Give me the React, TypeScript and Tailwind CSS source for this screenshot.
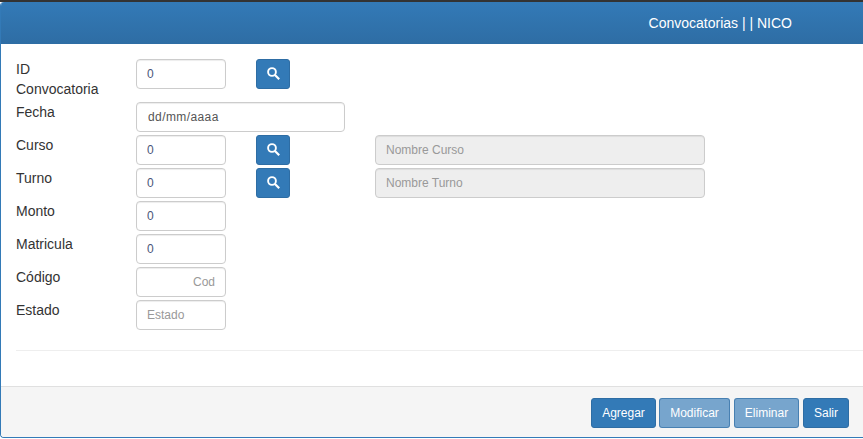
const inputBase =
  "h-[30px] rounded-[4px] border border-[#ccc] px-[10px] text-[12px] shadow-[inset_0_1px_1px_rgba(0,0,0,0.075)] outline-none";

function SearchButton() {
  return (
    <button className="ml-[30px] flex h-[30px] w-[34px] items-center justify-center rounded-[3px] border border-[#2e6da4] bg-[#337ab7]">
      <svg width="13" height="13" viewBox="0 0 13 13" fill="none" stroke="#fff" className="-mt-[2px]">
        <circle cx="5" cy="5" r="3.9" strokeWidth="1.9" />
        <path d="M8 8l4.2 4.2" strokeWidth="2.2" />
      </svg>
    </button>
  );
}

function Row({ label, children, className = "" }: { label: string; children: React.ReactNode; className?: string }) {
  return (
    <div className={`flex items-start ${className}`}>
      <label className="mr-[30px] w-[90px] shrink-0 text-[14px] leading-[20px] text-[#333]">{label}</label>
      {children}
    </div>
  );
}

function NumberInput({ value }: { value: string }) {
  return <input readOnly value={value} className={`${inputBase} w-[90px] bg-white text-[#4a5578]`} />;
}

function Disabled({ placeholder }: { placeholder: string }) {
  return (
    <input
      disabled
      placeholder={placeholder}
      className={`${inputBase} ml-[85px] w-[330px] bg-[#eee] placeholder:text-[#999]`}
    />
  );
}

export default function App() {
  return (
    <div className="flex h-[439px] w-[863px] flex-col overflow-hidden bg-white font-['Liberation_Sans',Arial,sans-serif]">
      <div className="h-[2px] shrink-0 bg-[#333]" />
      <div className="flex flex-1 flex-col overflow-hidden rounded-l-[4px] border-b border-l border-[#337ab7] bg-white">
        <header className="flex h-[42px] shrink-0 items-center justify-end bg-gradient-to-b from-[#337ab7] to-[#2e6da4] pr-[71px] text-[14px] text-white">
          Convocatorias | | NICO
        </header>
        <main className="flex flex-1 flex-col pl-[15px] pt-[15px]">
          <div className="flex flex-col gap-[3px]">
            <Row label="ID Convocatoria" className="h-[40px]">
              <NumberInput value="0" />
              <SearchButton />
            </Row>
            <Row label="Fecha">
              <input
                readOnly
                value="dd/mm/aaaa"
                className={`${inputBase} w-[209px] bg-white pl-[11px] tracking-[0.4px] text-[#555]`}
              />
            </Row>
            <Row label="Curso">
              <NumberInput value="0" />
              <SearchButton />
              <Disabled placeholder="Nombre Curso" />
            </Row>
            <Row label="Turno">
              <NumberInput value="0" />
              <SearchButton />
              <Disabled placeholder="Nombre Turno" />
            </Row>
            <Row label="Monto">
              <NumberInput value="0" />
            </Row>
            <Row label="Matricula">
              <NumberInput value="0" />
            </Row>
            <Row label="Código">
              <input placeholder="Cod" className={`${inputBase} w-[90px] bg-white text-right placeholder:text-[#999]`} />
            </Row>
            <Row label="Estado">
              <input placeholder="Estado" className={`${inputBase} w-[90px] bg-white placeholder:text-[#999]`} />
            </Row>
          </div>
          <hr className="mt-[20px] border-t border-[#eee]" />
        </main>
        <footer className="flex h-[51px] shrink-0 items-center justify-end border-t border-[#e0e0e0] bg-[#f5f5f5] pr-[14px] pt-[1px] text-[12px] text-white">
          <button className="h-[30px] w-[65px] rounded-[3px] border border-[#2e6da4] bg-[#337ab7]">Agregar</button>
          <button className="ml-[3px] h-[30px] w-[71px] rounded-[3px] border border-[#2e6da4]/65 bg-[#337ab7]/65">Modificar</button>
          <button className="ml-[4px] h-[30px] w-[65px] rounded-[3px] border border-[#2e6da4]/65 bg-[#337ab7]/65">Eliminar</button>
          <button className="ml-[4px] h-[30px] w-[46px] rounded-[3px] border border-[#2e6da4] bg-[#337ab7]">Salir</button>
        </footer>
      </div>
      <div className="h-[1px] shrink-0 bg-white" />
    </div>
  );
}
